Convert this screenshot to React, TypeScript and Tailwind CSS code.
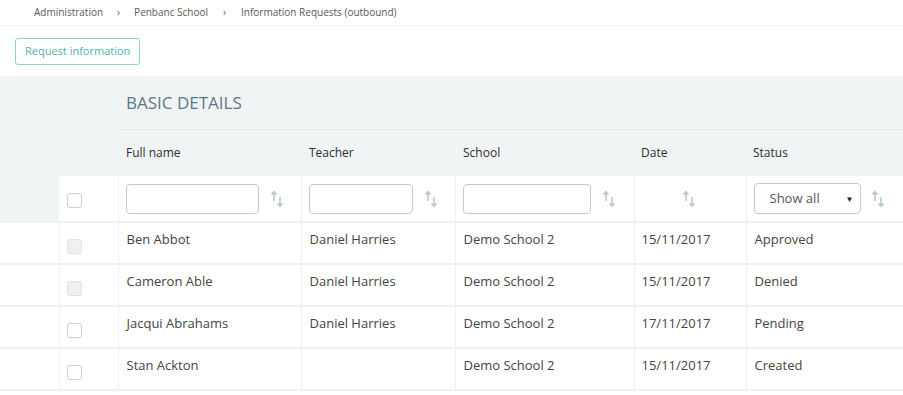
import React from 'react';

const rows = [
  { name: 'Ben Abbot', teacher: 'Daniel Harries', school: 'Demo School 2', date: '15/11/2017', status: 'Approved', disabled: true },
  { name: 'Cameron Able', teacher: 'Daniel Harries', school: 'Demo School 2', date: '15/11/2017', status: 'Denied', disabled: true },
  { name: 'Jacqui Abrahams', teacher: 'Daniel Harries', school: 'Demo School 2', date: '17/11/2017', status: 'Pending', disabled: false },
  { name: 'Stan Ackton', teacher: '', school: 'Demo School 2', date: '15/11/2017', status: 'Created', disabled: false },
];

function SortIcon() {
  return (
    <svg width="14" height="18" viewBox="0 0 14 18" className="shrink-0" fill="none" stroke="#b9c9d2" strokeWidth="1.6">
      <path d="M4 11V2" />
      <path d="M1.5 4.5L4 1.8 6.5 4.5" fill="#b9c9d2" />
      <path d="M10 7v9" />
      <path d="M7.5 13.5L10 16.2 12.5 13.5" fill="#b9c9d2" />
    </svg>
  );
}

function Checkbox({ disabled }: { disabled?: boolean }) {
  return (
    <div
      className={
        disabled
          ? 'w-[15px] h-[15px] rounded-[3px] border border-[#e2e2e2] bg-[#f0f0f0]'
          : 'w-[15px] h-[15px] rounded-[3px] border border-[#cfcfcf] bg-white'
      }
    />
  );
}

export default function App() {
  const vline = 'border-l border-[#edf0f2]';
  return (
    <div className="w-[903px] h-[395px] overflow-hidden bg-white font-['Open_Sans',sans-serif] text-[#444]">
      {/* breadcrumb */}
      <div className="h-[26px] border-b border-[#eef0f1] flex items-center pl-[34px] text-[10px] text-[#5a5a5a]">
        <span>Administration</span>
        <span className="mx-[14px]">›</span>
        <span>Penbanc School</span>
        <span className="mx-[15px]">›</span>
        <span>Information Requests (outbound)</span>
      </div>

      <div className="h-[50px] pl-[15px] pt-[11px]">
        <button className="h-[27px] px-[9px] rounded-[3px] border border-[#8fd3cc] text-[11px] text-[#4fb5ab] bg-white">
          Request information
        </button>
      </div>

      <table className="w-[903px] table-fixed border-collapse">
        <colgroup>
          <col className="w-[59px]" />
          <col className="w-[59px]" />
          <col className="w-[183px]" />
          <col className="w-[154px]" />
          <col className="w-[179px]" />
          <col className="w-[112px]" />
          <col />
        </colgroup>
        <thead>
          <tr className="h-[53px] bg-[#f1f4f5]">
            <th colSpan={2} />
            <th colSpan={5} className="text-left font-normal pl-[8px] text-[17px] text-[#5b7886] border-b border-[#e3e8ea]">
              BASIC DETAILS
            </th>
          </tr>
          <tr className="h-[47px] bg-[#f1f4f5] text-[12px] text-[#2e2e2e]">
            <th colSpan={2} />
            <th className="text-left font-normal pl-[8px]">Full name</th>
            <th className="text-left font-normal pl-[8px]">Teacher</th>
            <th className="text-left font-normal pl-[8px]">School</th>
            <th className="text-left font-normal pl-[7px]">Date</th>
            <th className="text-left font-normal pl-[7px]">Status</th>
          </tr>
          <tr className="h-[46px] border-b-2 border-[#eff2f4]">
            <td className="bg-[#f1f4f5]" />
            <td className="pl-[8px] align-middle">
              <div className="mt-[3px]"><Checkbox /></div>
            </td>
            <td className={`${vline} px-[7px]`}>
              <div className="flex items-center gap-[11px]">
                <div className="w-[133px] h-[30px] rounded-[4px] border border-[#c9c9c9] bg-white" />
                <SortIcon />
              </div>
            </td>
            <td className={`${vline} px-[7px]`}>
              <div className="flex items-center gap-[11px]">
                <div className="w-[104px] h-[30px] rounded-[4px] border border-[#c9c9c9] bg-white" />
                <SortIcon />
              </div>
            </td>
            <td className={`${vline} px-[7px]`}>
              <div className="flex items-center gap-[11px]">
                <div className="w-[128px] h-[30px] rounded-[4px] border border-[#c9c9c9] bg-white" />
                <SortIcon />
              </div>
            </td>
            <td className={vline}>
              <div className="flex justify-center pr-[2px]">
                <SortIcon />
              </div>
            </td>
            <td className={`${vline} px-[7px]`}>
              <div className="flex items-center gap-[10px]">
                <div className="w-[107px] h-[31px] rounded-[4px] border border-[#c9c9c9] bg-white flex items-center pl-[15px] pr-[6px] text-[13px] text-[#555]">
                  <span className="flex-1">Show all</span>
                  <span className="text-[8px] text-[#222]">▼</span>
                </div>
                <SortIcon />
              </div>
            </td>
          </tr>
        </thead>
        <tbody className="text-[13px] text-[#444]">
          {rows.map((r) => (
            <tr key={r.name} className="h-[42px] border-b-2 border-[#eff2f4] align-top">
              <td />
              <td className={`${vline} pl-[7px] pt-[16px]`}>
                <Checkbox disabled={r.disabled} />
              </td>
              <td className={`${vline} pl-[8px] pt-[7px]`}>{r.name}</td>
              <td className={`${vline} pl-[8px] pt-[7px]`}>{r.teacher}</td>
              <td className={`${vline} pl-[8px] pt-[7px]`}>{r.school}</td>
              <td className={`${vline} pl-[7px] pt-[7px]`}>{r.date}</td>
              <td className={`${vline} pl-[8px] pt-[7px]`}>{r.status}</td>
            </tr>
          ))}
        </tbody>
      </table>
    </div>
  );
}
